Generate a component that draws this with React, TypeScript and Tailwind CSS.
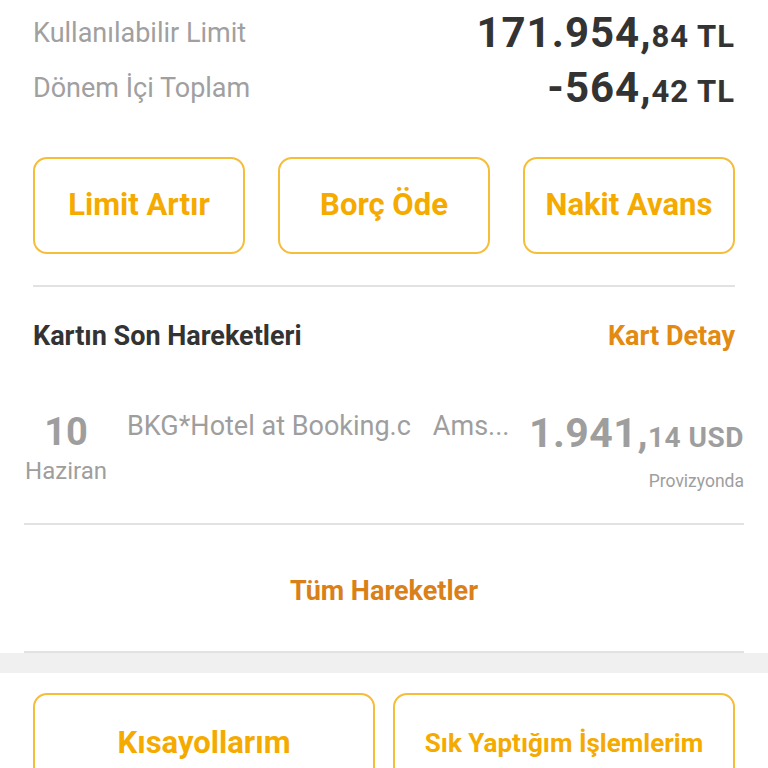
import React from "react";

const Amount = ({
  main,
  frac,
  cur,
  className,
  mainClass,
  fracClass,
}: {
  main: string;
  frac: string;
  cur: string;
  className: string;
  mainClass: string;
  fracClass: string;
}) => (
  <p className={`font-bold leading-none whitespace-nowrap ${className}`}>
    <span className={mainClass}>{main}</span>
    <span className={fracClass}>
      {frac} {cur}
    </span>
  </p>
);

export default function App() {
  return (
    <div className="w-[768px] h-[768px] overflow-hidden bg-white font-['Roboto',sans-serif]">
      <div className="px-[33px]">
        <div className="flex items-center justify-between h-[62px] pt-[4px]">
          <span className="text-[27px] text-[#a0a0a0]">Kullanılabilir Limit</span>
          <Amount
            main="171.954,"
            frac="84"
            cur="TL"
            className="text-[#333333]"
            mainClass="text-[42px] tracking-[1px]"
            fracClass="text-[31px] tracking-[1px]"
          />
        </div>
        <div className="flex items-center justify-between h-[52px]">
          <span className="text-[27px] text-[#a0a0a0]">Dönem İçi Toplam</span>
          <Amount
            main="-564,"
            frac="42"
            cur="TL"
            className="text-[#333333]"
            mainClass="text-[42px] tracking-[1px]"
            fracClass="text-[31px] tracking-[1px]"
          />
        </div>

        <div className="flex justify-between mt-[43px]">
          {["Limit Artır", "Borç Öde", "Nakit Avans"].map((t) => (
            <button
              key={t}
              className="w-[212px] h-[97px] rounded-[14px] border-2 border-[#f5bd3a] text-[31px] font-bold text-[#f5aa00]"
            >
              {t}
            </button>
          ))}
        </div>

        <div className="h-[2px] bg-[#e2e2e2] mt-[31px]" />

        <div className="flex items-center justify-between h-[98px]">
          <span className="text-[27px] font-bold text-[#333333]">Kartın Son Hareketleri</span>
          <span className="text-[27px] font-bold text-[#e28a12]">Kart Detay</span>
        </div>
      </div>

      <div className="px-[24px]">
        <div className="flex justify-between items-start pt-[28px] h-[140px] border-b-2 border-[#e2e2e2]">
          <div className="flex flex-col items-center w-[84px] shrink-0">
            <span className="text-[38px] font-bold text-[#9e9e9e] leading-none">10</span>
            <span className="text-[24px] text-[#9e9e9e] mt-[2px]">Haziran</span>
          </div>
          <div className="flex gap-[22px] text-[27px] text-[#9e9e9e] ml-[19px] leading-none">
            <span>BKG*Hotel at Booking.c</span>
            <span>Ams...</span>
          </div>
          <div className="flex flex-col items-end ml-auto">
            <Amount
              main="1.941,"
              frac="14"
              cur="USD"
              className="text-[#9e9e9e]"
              mainClass="text-[41px] tracking-[0.5px]"
              fracClass="text-[28px] tracking-[0.5px]"
            />
            <span className="text-[17.5px] text-[#9e9e9e] mt-[14px]">Provizyonda</span>
          </div>
        </div>

        <div className="flex items-center justify-center h-[128px] pt-[6px] border-b-2 border-[#e2e2e2]">
          <span className="text-[27px] font-bold text-[#d9801a]">Tüm Hareketler</span>
        </div>
      </div>

      <div className="h-[20px] bg-[#f0f0f0]" />

      <div className="flex justify-between px-[33px] pt-[20px]">
        <button className="w-[342px] h-[100px] rounded-[14px] border-2 border-[#f5bd3a] text-[31px] font-bold text-[#f5aa00]">
          Kısayollarım
        </button>
        <button className="w-[342px] h-[100px] rounded-[14px] border-2 border-[#f5bd3a] text-[26px] font-bold text-[#f5aa00]">
          Sık Yaptığım İşlemlerim
        </button>
      </div>
    </div>
  );
}
